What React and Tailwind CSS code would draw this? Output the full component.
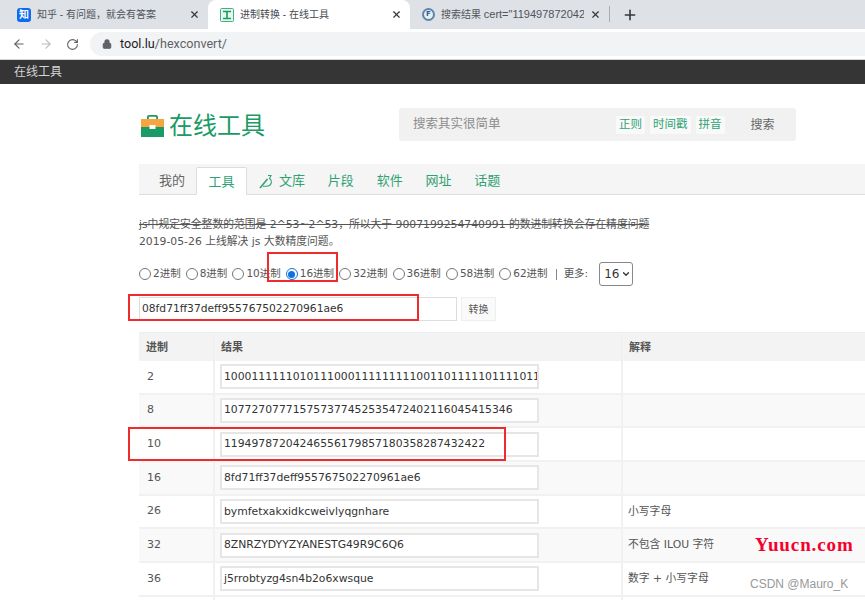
import React from 'react';
import { ArrowLeft, ArrowRight, RotateCw, Lock, X, Plus, ChevronDown } from 'lucide-react';

const rows = [
  { base: '2', value: '1000111111010111000111111111001101111101111011101', note: '' },
  { base: '8', value: '107727077715757377452535472402116045415346', note: '' },
  { base: '10', value: '11949787204246556179857180358287432422', note: '' },
  { base: '16', value: '8fd71ff37deff955767502270961ae6', note: '' },
  { base: '26', value: 'bymfetxakxidkcweivlyqgnhare', note: '小写字母' },
  { base: '32', value: '8ZNRZYDYYZYANESTG49R9C6Q6', note: '不包含 ILOU 字符' },
  { base: '36', value: 'j5rrobtyzg4sn4b2o6xwsque', note: '数字 + 小写字母' },
];

const radios = ['2进制', '8进制', '10进制', '16进制', '32进制', '36进制', '58进制', '62进制'];
const navItems = ['片段', '软件', '网址', '话题'];

function Radio({ checked }) {
  return (
    <span className={`w-[12px] h-[12px] rounded-full border flex items-center justify-center bg-white shrink-0 ${checked ? 'border-[#0f72e0]' : 'border-[#767676]'}`}>
      {checked && <span className="w-[7px] h-[7px] rounded-full bg-[#0f72e0]" />}
    </span>
  );
}

function Tab({ icon, title, active }) {
  return (
    <div className={`h-[29px] flex items-center pl-[12px] pr-[8px] gap-[6px] rounded-t-[8px] ${active ? 'bg-white text-[#45494e]' : 'text-[#50545a]'}`}>
      {icon}
      <span className="flex-1 text-[10px] font-['Liberation_Sans','Noto_Sans_CJK_SC',sans-serif] whitespace-nowrap overflow-hidden">{title}</span>
      <X size={11} strokeWidth={2.5} className="text-[#33363a] shrink-0" />
    </div>
  );
}

export default function App() {
  return (
    <div className="relative w-[865px] h-[600px] overflow-hidden bg-white text-[#555] font-['DejaVu_Sans','Noto_Sans_CJK_SC',sans-serif]">
      {/* browser tabs */}
      <div className="h-[29px] bg-[#dee1e6] flex items-end pl-[5px]">
        <div className="w-[203px]">
          <Tab
            title="知乎 - 有问题，就会有答案"
            icon={<span className="w-[14px] h-[14px] rounded-[3px] bg-[#0a6cf0] text-white text-[10px] font-bold flex items-center justify-center shrink-0">知</span>}
          />
        </div>
        <div className="w-[202px]">
          <Tab
            active
            title="进制转换 - 在线工具"
            icon={
              <svg width="14" height="14" viewBox="0 0 14 14" className="shrink-0">
                <rect x="0.5" y="0.5" width="13" height="13" rx="1" fill="#e8f6ef" stroke="#3fb184" />
                <path d="M3 3.5h8M7 3.5v7M3 10.5h8" stroke="#1a9a64" strokeWidth="1.6" fill="none" />
              </svg>
            }
          />
        </div>
        <div className="w-[199px]">
          <Tab
            title={<>搜索结果 <span className="text-[11px]">cert=&quot;119497872042</span></>}
            icon={
              <span className="w-[13px] h-[13px] rounded-full border-2 border-[#5d86a8] bg-[#e6eef5] text-[#2f5f8a] text-[7px] font-bold flex items-center justify-center shrink-0">F</span>
            }
          />
        </div>
        <div className="w-px h-[16px] bg-[#a9adb2] mb-[7px]" />
        <Plus size={16} strokeWidth={2.4} className="text-[#33363a] ml-[12px] mb-[6px]" />
      </div>

      {/* address bar */}
      <div className="h-[31px] flex items-center pl-[12px] border-b border-[#d5d5d5] bg-white">
        <ArrowLeft size={14} strokeWidth={2} className="text-[#5f6368]" />
        <ArrowRight size={14} strokeWidth={2} className="text-[#babcbe] ml-[13px]" />
        <RotateCw size={13} strokeWidth={2} className="text-[#5f6368] ml-[13px]" />
        <div className="ml-[11px] flex-1 h-[24px] bg-[#f1f3f4] rounded-l-full flex items-center pl-[12px]">
          <Lock size={10} strokeWidth={2.5} className="text-[#5f6368] fill-[#5f6368]" />
          <span className="ml-[8px] font-['Roboto',sans-serif] text-[12.6px] text-[#202124]">tool.lu<span className="text-[#5f6368]">/hexconvert/</span></span>
        </div>
      </div>

      {/* site top bar */}
      <div className="h-[24px] bg-[#353535] flex items-center pl-[14px] text-[12px] text-[#d4d4d4]">在线工具</div>

      <div className="pl-[139px]">
        {/* logo and search */}
        <div className="flex items-start pt-[24px] h-[80px]">
          <div className="flex items-center pt-[6px] w-[260px] pl-[2px]">
            <svg width="23" height="22" viewBox="0 0 23 22">
              <path d="M6 4V2A2 2 0 0 1 8 0h7a2 2 0 0 1 2 2v2h-1.800V1.800H7.800V4z" fill="#1a9a64" />
              <path d="M0 4h23v8h-8.500v-2h-6v2H0z" fill="#f7a540" />
              <path d="M0 12h8.500v2h6v-2H23v10H0z" fill="#1a9a64" />
            </svg>
            <span className="ml-[5px] text-[24px] leading-none text-[#1a9a64]">在线工具</span>
          </div>
          <div className="w-[397px] h-[33px] bg-[#f1f1f1] rounded-[3px] flex items-center pl-[14px]">
            <span className="text-[#8d8d8d] w-[203px] text-[12.5px]">搜索其实很简单</span>
            <div className="flex gap-[5px] text-[11.5px] text-[#2fa273]">
              <span className="bg-[#f9f9f9] rounded-[2px] px-[3px] h-[18px] flex items-center">正则</span>
              <span className="bg-[#f9f9f9] rounded-[2px] px-[3px] h-[18px] flex items-center">时间戳</span>
              <span className="bg-[#f9f9f9] rounded-[2px] px-[3px] h-[18px] flex items-center">拼音</span>
            </div>
            <span className="ml-[26px] text-[12px] text-[#666]">搜索</span>
          </div>
        </div>

        {/* site tabs */}
        <div className="h-[31px] bg-[#f5f5f5] border-b border-[#ddd] flex items-end pl-[20px] text-[13px] text-[#2fa273]">
          <span className="h-[30px] pt-[4px] flex items-center text-[#666]">我的</span>
          <span className="ml-[11px] w-[51px] h-[28px] -mb-px pt-[1px] bg-white border border-[#ddd] border-b-white rounded-t-[2px] flex items-center justify-center">工具</span>
          <span className="ml-[12px] h-[30px] pt-[4px] flex items-center gap-[5px]">
            <svg width="15" height="15" viewBox="0 0 15 15" fill="none" stroke="#2fa273">
              <path d="M1 14 8.500 5" strokeWidth="1.6" />
              <path d="M9 1.500h3l-1.500 3c3 2 2.500 6.500-1.500 7.500-1.500.4-3 .3-5 .3" strokeWidth="1.100" />
            </svg>
            文库
          </span>
          {navItems.map((item) => (
            <span key={item} className="ml-[22.8px] h-[30px] pt-[4px] flex items-center">{item}</span>
          ))}
        </div>

        {/* notice */}
        <div className="pt-[21px] text-[10.8px] leading-[17px] text-[#555]">
          <p className="line-through whitespace-nowrap">js中规定安全整数的范围是 2^53~2^53，所以大于 9007199254740991 的数进制转换会存在精度问题</p>
          <p className="whitespace-nowrap">2019-05-26 上线解决 js 大数精度问题。</p>
        </div>

        {/* radio row */}
        <div className="mt-[12px] h-[24px] flex items-center text-[10.5px]">
          {radios.map((r) => (
            <label key={r} className="flex items-center gap-[2px] mr-[5px] whitespace-nowrap">
              <Radio checked={r === '16进制'} />
              <span>{r}</span>
            </label>
          ))}
          <span className="ml-[3px] w-px h-[11px] bg-[#888] mr-[7px]" />
          <span className="whitespace-nowrap">更多:</span>
          <span className="ml-[11px] w-[34px] h-[24px] border border-[#888] rounded-[3px] flex items-center pl-[4px] text-[12px] text-[#333]">
            16<ChevronDown size={10} strokeWidth={3} className="ml-[2px]" />
          </span>
        </div>

        {/* input row */}
        <div className="mt-[11px] flex items-center">
          <div className="w-[318px] h-[24px] pt-[1px] border border-[#ddd] flex items-center pl-[2px] text-[10.7px] text-[#333]">08fd71ff37deff955767502270961ae6</div>
          <span className="ml-[4px] w-[35px] h-[24px] border border-[#eee] bg-[#fafafa] flex items-center justify-center text-[10px] text-[#555]">转换</span>
        </div>

        {/* result table */}
        <div className="mt-[11px] w-[726px] border-t border-[#eee] text-[11px]">
          <div className="h-[28px] pt-[2px] bg-[#f3f3f3] flex items-center font-bold">
            <span className="w-[74px] pl-[7px]">进制</span>
            <span className="w-[408px] pl-[7px] border-l border-[#eee] h-full flex items-center">结果</span>
            <span className="flex-1 pl-[7px] border-l border-[#eee] h-full flex items-center">解释</span>
          </div>
          {rows.map((row, i) => (
            <div key={row.base} className={`h-[33.7px] flex items-center border-b-2 border-[#f1f1f1] ${i % 2 === 1 ? 'bg-[#f9f9f9]' : 'bg-white'}`}>
              <span className="w-[74px] pl-[8px] text-[#555]">{row.base}</span>
              <div className="w-[408px] h-full pl-[5px] border-l-2 border-[#f1f1f1] flex items-center">
                <div className="w-[319px] h-[25px] bg-white border-2 border-[#e6e6e6] flex items-center pl-[2px] text-[10.8px] text-[#333] whitespace-nowrap overflow-hidden">{row.value}</div>
              </div>
              <span className="flex-1 h-full pl-[5px] border-l-2 border-[#f1f1f1] flex items-center text-[10.8px] text-[#555]">{row.note}</span>
            </div>
          ))}
          <div className="h-[10px] flex">
            <span className="w-[74px]" />
            <span className="w-[408px] border-l-2 border-[#f1f1f1]" />
            <span className="flex-1 border-l-2 border-[#f1f1f1]" />
          </div>
        </div>
      </div>

      {/* red annotation boxes drawn on top of the screenshot */}
      <div className="absolute left-[267px] top-[252px] w-[71px] h-[30px] border-2 border-[#f02b2b]" />
      <div className="absolute left-[128px] top-[294px] w-[291px] h-[27px] border-2 border-[#f02b2b]" />
      <div className="absolute left-[128px] top-[427px] w-[378px] h-[34px] border-2 border-[#f02b2b]" />

      {/* watermarks */}
      <div className="absolute left-[755px] top-[535px] text-[19px] leading-[20px] font-bold tracking-[0.9px] font-['Liberation_Serif',serif] text-[#f5002c]">Yuucn.com</div>
      <div className="absolute left-[750px] top-[576px] text-[12px] leading-[16px] font-['Liberation_Sans',sans-serif] text-[#999]">CSDN @Mauro_K</div>
    </div>
  );
}
